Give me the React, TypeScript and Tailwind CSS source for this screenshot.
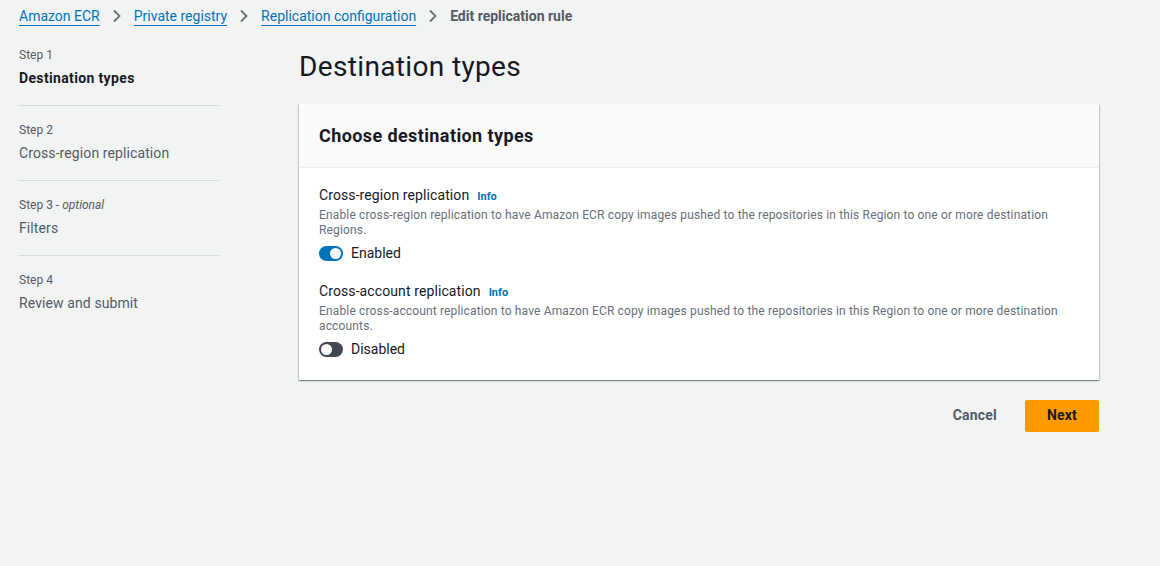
import React from 'react';

const font = { fontFamily: 'Roboto, "Open Sans", sans-serif' };

const crumbs = ['Amazon ECR', 'Private registry', 'Replication configuration'];

const steps = [
  { label: 'Step 1', title: 'Destination types', active: true },
  { label: 'Step 2', title: 'Cross-region replication' },
  { label: 'Step 3', optional: true, title: 'Filters' },
  { label: 'Step 4', title: 'Review and submit' },
];

function Chevron() {
  return (
    <svg width="10" height="14" viewBox="0 0 10 14" className="mx-3 shrink-0">
      <path d="M2 1.5 L7.5 7 L2 12.5" fill="none" stroke="#687078" strokeWidth="1.8" />
    </svg>
  );
}

function Toggle({ on }: { on: boolean }) {
  return (
    <span
      className={`relative inline-block h-[15px] w-[24px] rounded-full ${on ? 'bg-[#0073bb]' : 'bg-[#414750]'}`}
    >
      <span
        className={`absolute top-[2px] h-[11px] w-[11px] rounded-full bg-white ${on ? 'left-[11px]' : 'left-[2px]'}`}
      />
    </span>
  );
}

function Option({ title, desc, on }: { title: string; desc: string; on: boolean }) {
  return (
    <div>
      <div className="flex items-baseline gap-[8px]">
        <span className="text-[14px] tracking-[0.1px] text-[#16191f]">{title}</span>
        <span className="text-[11px] font-bold text-[#0073bb]">Info</span>
      </div>
      <p className="mt-[2px] text-[12px] leading-[15px] tracking-[0.15px] text-[#687078]">{desc}</p>
      <div className="mt-[5px] flex items-center gap-[8px]">
        <Toggle on={on} />
        <span className="text-[14px] text-[#16191f]">{on ? 'Enabled' : 'Disabled'}</span>
      </div>
    </div>
  );
}

export default function App() {
  return (
    <div style={font} className="min-h-[566px] bg-[#f2f3f3] text-[#16191f]">
      <nav className="flex items-center px-[19px] pt-[6px] text-[14px] leading-[20px]">
        {crumbs.map((c) => (
          <React.Fragment key={c}>
            <a className="text-[#0073bb] underline underline-offset-[4px] decoration-[1px]">{c}</a>
            <Chevron />
          </React.Fragment>
        ))}
        <span className="font-bold text-[#545b64]">Edit replication rule</span>
      </nav>

      <div className="flex px-[19px] pt-[21px]">
        <aside className="w-[200px] shrink-0">
          {steps.map((s, i) => (
            <div
              key={s.label}
              className={`pb-[17px] ${i > 0 ? 'pt-[16px]' : ''} ${i < steps.length - 1 ? 'border-b border-[#d5dbdb]' : ''}`}
            >
              <div className="text-[12px] leading-[16px] text-[#545b64]">
                {s.label}
                {s.optional && (
                  <>
                    {' - '}
                    <i>optional</i>
                  </>
                )}
              </div>
              <div
                className={`mt-[5px] text-[14px] leading-[20px] ${s.active ? 'font-bold tracking-[0.35px] text-[#16191f]' : 'tracking-[0.1px] text-[#545b64]'}`}
              >
                {s.title}
              </div>
            </div>
          ))}
        </aside>

        <main className="ml-[80px] w-[800px]">
          <h1 className="mt-[2px] text-[28px] leading-[36px] tracking-[0.35px] text-[#16191f]">Destination types</h1>
          <section className="mt-[19px] bg-white shadow-[0_1px_1px_0_rgba(0,28,36,0.3),1px_1px_1px_0_rgba(0,28,36,0.15),-1px_1px_1px_0_rgba(0,28,36,0.15)]">
            <div className="flex h-[64px] items-center border-b border-[#eaeded] bg-[#fafafa] px-[20px]">
              <h2 className="text-[18px] font-bold tracking-[0.4px]">Choose destination types</h2>
            </div>
            <div className="space-y-[17px] px-[20px] pb-[20px] pt-[17px]">
              <Option
                title="Cross-region replication"
                desc="Enable cross-region replication to have Amazon ECR copy images pushed to the repositories in this Region to one or more destination Regions."
                on
              />
              <Option
                title="Cross-account replication"
                desc="Enable cross-account replication to have Amazon ECR copy images pushed to the repositories in this Region to one or more destination accounts."
                on={false}
              />
            </div>
          </section>
          <div className="mt-[19px] flex items-center justify-end gap-[8px]">
            <button className="px-[20px] py-[6px] text-[14px] font-bold tracking-[0.2px] text-[#545b64]">Cancel</button>
            <button className="h-[32px] w-[74px] rounded-[2px] bg-[#ff9900] text-[14px] font-bold tracking-[0.2px] text-[#16191f]">
              Next
            </button>
          </div>
        </main>
      </div>
    </div>
  );
}
